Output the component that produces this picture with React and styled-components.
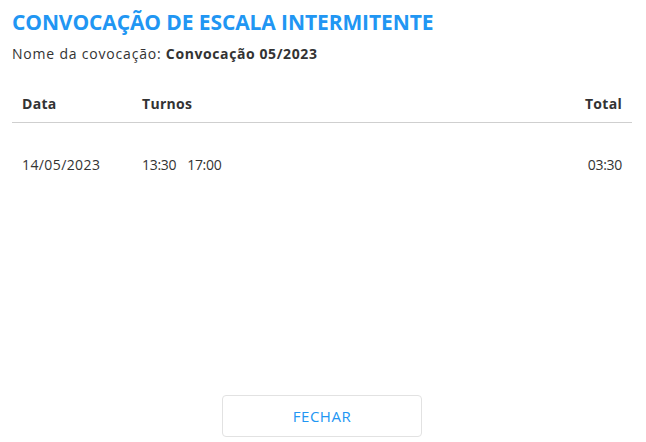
import React from "react";
import styled, { createGlobalStyle } from "styled-components";

const Global = createGlobalStyle`
  html, body { margin: 0; padding: 0; background: #fff; }
  body { font-family: "Open Sans", "Noto Sans", sans-serif; color: #333; }
`;

const Page = styled.div`
  width: 646px;
  height: 442px;
  box-sizing: border-box;
  padding: 8px 14px 5px 12px;
  display: flex;
  flex-direction: column;
`;

const Title = styled.h1`
  margin: 0;
  font-size: 21px;
  line-height: 28px;
  font-weight: 700;
  color: #2196f3;
  letter-spacing: -0.1px;
`;

const Subtitle = styled.p`
  margin: 9px 0 0;
  font-size: 14px;
  line-height: 18px;
  letter-spacing: 0.8px;
  color: #333;
  strong { font-weight: 700; letter-spacing: 0.6px; }
`;

const Table = styled.div`
  margin-top: 21px;
  display: flex;
  flex-direction: column;
`;

const Row = styled.div`
  display: grid;
  grid-template-columns: 120px 1fr 120px;
  align-items: center;
  height: ${(p) => (p.$head ? "38px" : "82px")};
  border-bottom: ${(p) => (p.$head ? "1px solid #cfcfcf" : "none")};
  font-size: 14px;
  letter-spacing: ${(p) => (p.$head ? "0.3px" : "0.4px")};
  font-weight: ${(p) => (p.$head ? 700 : 400)};
  color: #333;
`;

const Cell = styled.div`
  padding: 0 10px;
  display: flex;
  justify-content: ${(p) => (p.$right ? "flex-end" : "flex-start")};
  gap: 11px;
`;

const Time = styled.span`
  letter-spacing: -0.3px;
`;

const Spacer = styled.div`
  flex: 1;
`;

const Footer = styled.div`
  display: flex;
  justify-content: center;
`;

const Button = styled.button`
  width: 200px;
  height: 42px;
  background: #fff;
  border: 1px solid #e2e2e2;
  border-radius: 4px;
  color: #2196f3;
  font-family: inherit;
  font-size: 15px;
  letter-spacing: 0.5px;
  cursor: pointer;
`;

export default function App() {
  return (
    <>
      <Global />
      <Page>
        <Title>CONVOCAÇÃO DE ESCALA INTERMITENTE</Title>
        <Subtitle>
          Nome da covocação: <strong>Convocação 05/2023</strong>
        </Subtitle>
        <Table>
          <Row $head>
            <Cell>Data</Cell>
            <Cell>Turnos</Cell>
            <Cell $right>Total</Cell>
          </Row>
          <Row>
            <Cell>14/05/2023</Cell>
            <Cell>
              <Time>13:30</Time>
              <Time>17:00</Time>
            </Cell>
            <Cell $right>
              <Time>03:30</Time>
            </Cell>
          </Row>
        </Table>
        <Spacer />
        <Footer>
          <Button>FECHAR</Button>
        </Footer>
      </Page>
    </>
  );
}
